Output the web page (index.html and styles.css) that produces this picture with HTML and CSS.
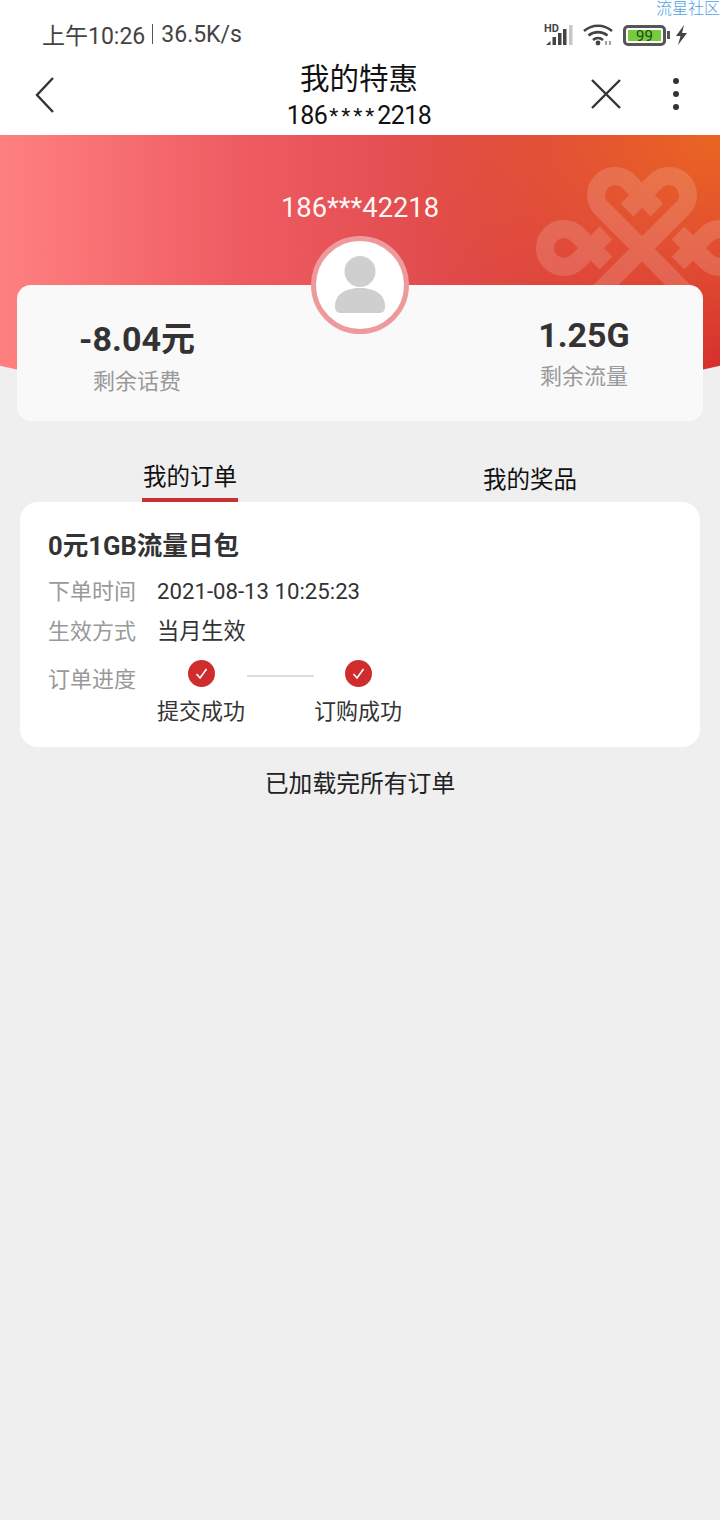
FILE: index.html
```html
<!DOCTYPE html>
<html lang="en">
<head>
    <meta charset="UTF-8">
    <meta name="viewport" content="width=device-width, initial-scale=1.0">
    <title>我的特惠</title>
    <link rel="stylesheet" href="styles.css">
</head>
<body>
    <div class="watermark">流星社区</div>

    <div class="status-bar">
        <div class="status-left">
            <span>上午10:26</span>
            <span class="status-sep"></span>
            <span>36.5K/s</span>
        </div>
        <div class="status-right">
            <svg class="icon-signal" width="30" height="26" viewBox="0 -2 30 26">
                <text x="0" y="8" class="hd-text">HD</text>
                <path d="M2 21 L6.5 17 V21 Z" fill="#444"/>
                <rect x="8.5" y="13" width="3.5" height="8" fill="#444"/>
                <rect x="14" y="9" width="3.5" height="12" fill="#444"/>
                <rect x="19" y="5" width="3.5" height="16" fill="#444"/>
                <rect x="25" y="1" width="3.5" height="20" fill="#444" opacity="0.3"/>
            </svg>
            <svg class="icon-wifi" width="30" height="22" viewBox="0 0 30 22">
                <g fill="none" stroke="#444" stroke-width="2.6">
                    <path d="M1 7 C9 0 21 0 29 7"/>
                    <path d="M5.5 11.5 C11 7 19 7 24.5 11.5"/>
                    <path d="M10 16 C13 13.5 17 13.5 20 16"/>
                </g>
                <circle cx="15" cy="19" r="2.4" fill="#444"/>
                <path d="M23 17v4M27 17v4" stroke="#666" stroke-width="1.2"/>
            </svg>
            <div class="battery">
                <div class="battery-body"><span class="battery-level">99</span></div>
                <div class="battery-tip"></div>
            </div>
            <svg class="icon-bolt" width="13" height="20" viewBox="0 0 13 20">
                <path d="M9 0 L1 11 H5.5 L3 20 L12 8 H7 Z" fill="#444"/>
            </svg>
        </div>
    </div>

    <div class="nav">
        <svg class="nav-back" width="22" height="38" viewBox="0 0 22 38">
            <path d="M19 2 L3 19 L19 36" fill="none" stroke="#333" stroke-width="2.4"/>
        </svg>
        <div class="nav-title">
            <div class="nav-name">我的特惠</div>
            <div class="nav-phone">186<span class="nav-stars">****</span>2218</div>
        </div>
        <div class="nav-actions">
            <svg class="nav-close" width="32" height="32" viewBox="0 0 32 32">
                <path d="M2 2 L30 30 M30 2 L2 30" fill="none" stroke="#333" stroke-width="2.4"/>
            </svg>
            <div class="nav-more"><i></i><i></i><i></i></div>
        </div>
    </div>

    <div class="hero">
        <div class="hero-bg">
            <svg class="hero-logo" width="240" height="180" viewBox="520 150 240 180">
                <g fill="none" stroke="#fff" stroke-width="18">
                    <path d="M690 297 L602.6 209.4 A19 19 0 1 1 629.4 182.6 L657 210"/>
                    <path d="M594 297 L681.4 209.4 A19 19 0 1 0 654.6 182.6 L627 210"/>
                    <path d="M606 233 L577.4 261.4 A19 19 0 1 1 577.4 234.6 L606 263"/>
                    <path d="M678 233 L706.6 261.4 A19 19 0 1 0 706.6 234.6 L678 263"/>
                </g>
            </svg>
        </div>
        <div class="hero-phone">186***42218</div>
        <div class="summary">
            <div class="summary-item">
                <div class="summary-value">-8.04元</div>
                <div class="summary-label">剩余话费</div>
            </div>
            <div class="summary-item summary-item-right">
                <div class="summary-value">1.25G</div>
                <div class="summary-label">剩余流量</div>
            </div>
            <div class="avatar">
                <svg width="52" height="58" viewBox="0 0 52 58">
                    <circle cx="26" cy="15.5" r="15.5" fill="#cfcfcf"/>
                    <path d="M1 50 C1 38 12 32 26 32 C40 32 51 38 51 50 C51 55 49 57 45 57 H7 C3 57 1 55 1 50 Z" fill="#cfcfcf"/>
                </svg>
            </div>
        </div>
    </div>

    <div class="tabs">
        <div class="tab tab-active">我的订单</div>
        <div class="tab tab-other">我的奖品</div>
    </div>

    <div class="order">
        <div class="order-title">0元1GB流量日包</div>
        <div class="order-row">
            <span class="order-label">下单时间</span>
            <span class="order-value order-date">2021-08-13 10:25:23</span>
        </div>
        <div class="order-row">
            <span class="order-label">生效方式</span>
            <span class="order-value">当月生效</span>
        </div>
        <div class="order-progress">
            <span class="order-label">订单进度</span>
            <div class="step">
                <svg class="step-icon" width="27" height="27" viewBox="0 0 27 27">
                    <circle cx="13.5" cy="13.5" r="13.5" fill="#cf2c2e"/>
                    <path d="M8.5 14 L12 18 L18.5 9" fill="none" stroke="#fff" stroke-width="1.6"/>
                </svg>
                <div class="step-text">提交成功</div>
            </div>
            <div class="step-line"></div>
            <div class="step">
                <svg class="step-icon" width="27" height="27" viewBox="0 0 27 27">
                    <circle cx="13.5" cy="13.5" r="13.5" fill="#cf2c2e"/>
                    <path d="M8.5 14 L12 18 L18.5 9" fill="none" stroke="#fff" stroke-width="1.6"/>
                </svg>
                <div class="step-text">订购成功</div>
            </div>
        </div>
    </div>

    <div class="end-text">已加载完所有订单</div>
</body>
</html>
```

FILE: styles.css
```css
body {
    margin: 0;
    height: 1520px;
    overflow: hidden;
    background-color: #efefef;
    font-family: Roboto, "Noto Sans CJK SC", sans-serif;
    color: #333;
    position: relative;
}

.watermark {
    position: absolute;
    top: 0;
    left: 656px;
    white-space: nowrap;
    font-size: 16px;
    line-height: 17px;
    font-weight: 300;
    color: #4c9fe2;
}

/* Status bar */
.status-bar {
    height: 64px;
    background-color: #fff;
    display: flex;
    justify-content: space-between;
    align-items: center;
    padding: 4px 32px 0 42px;
    box-sizing: border-box;
}

.status-left {
    display: flex;
    align-items: center;
    font-size: 23px;
    color: #444;
}

.status-sep {
    width: 1px;
    height: 20px;
    background-color: #555;
    margin: 0 8px 0 7px;
}

.status-right {
    display: flex;
    align-items: center;
    gap: 10px;
    margin-top: 2px;
}

.hd-text {
    font-size: 11px;
    font-weight: 700;
    fill: #444;
}

.battery {
    display: flex;
    align-items: center;
}

.battery-body {
    width: 43px;
    height: 21px;
    box-sizing: border-box;
    border: 3px solid #555;
    border-radius: 5px;
    padding: 2px;
    display: flex;
}

.battery-level {
    flex: 1;
    background-color: #76cc3c;
    font-size: 15px;
    line-height: 13px;
    text-align: center;
    color: #1d4a10;
}

.battery-tip {
    width: 3px;
    height: 8px;
    margin-left: 1px;
    background-color: #555;
}

.icon-bolt {
    margin-left: -5px;
}

.icon-signal {
    margin-right: -1px;
}

/* Nav */
.nav {
    height: 71px;
    background-color: #fff;
    display: grid;
    grid-template-columns: 1fr auto 1fr;
    align-items: center;
    padding: 0 41px 0 39px;
}

.nav-back {
    margin: -10px 0 0 -5px;
}

.nav-title {
    text-align: center;
    color: #111;
}

.nav-name {
    font-size: 29.5px;
    line-height: 36px;
    margin-top: -5px;
}

.nav-phone {
    font-size: 25px;
    line-height: 36px;
    letter-spacing: -0.6px;
    margin-top: 1px;
}

.nav-stars {
    font-size: 21px;
    letter-spacing: 3px;
    vertical-align: 1px;
    margin-left: 2px;
}

.nav-actions {
    display: flex;
    justify-content: flex-end;
    align-items: center;
    gap: 51px;
    margin-top: -12px;
}

.nav-more {
    display: flex;
    flex-direction: column;
    gap: 7px;
}

.nav-more i {
    width: 6px;
    height: 6px;
    border-radius: 50%;
    background-color: #333;
}

/* Hero */
.hero {
    position: relative;
    padding: 57px 17px 0;
}

.hero-bg {
    position: absolute;
    top: 0;
    left: 0;
    width: 720px;
    height: 270px;
    overflow: hidden;
    background:
        radial-gradient(ellipse 340px 250px at 100% 0, #ea6622, rgba(230, 90, 50, 0.7) 50%, rgba(230, 80, 60, 0)),
        linear-gradient(90deg, #ff8080 0%, #ee5c62 33%, #e04a4c 62%, #d42b2d 100%);
    clip-path: ellipse(700px 269px at 50% 0);
}

.hero-logo {
    position: absolute;
    top: 15px;
    left: 520px;
    opacity: 0.15;
}

.hero-phone {
    position: relative;
    text-align: center;
    font-size: 27.3px;
    line-height: 32px;
    color: #fff;
    opacity: 0.95;
}

.summary {
    position: relative;
    margin-top: 61px;
    height: 136px;
    background-color: #f9f9f9;
    border-radius: 14px;
    display: flex;
    justify-content: space-between;
}

.summary-item {
    width: 240px;
    text-align: center;
    padding-top: 32px;
}

.summary-item-right {
    width: 238px;
    padding-top: 28px;
}

.summary-value {
    font-size: 34px;
    line-height: 44px;
    font-weight: 700;
}

.summary-label {
    font-size: 22px;
    line-height: 32px;
    margin-top: 5px;
    color: #999;
}

.summary-item-right .summary-label {
    margin-top: 4px;
}

.avatar {
    position: absolute;
    top: -49px;
    left: 294px;
    width: 98px;
    height: 98px;
    box-sizing: border-box;
    border: 5px solid #ee9a9d;
    border-radius: 50%;
    background-color: #fff;
    display: flex;
    justify-content: center;
    align-items: center;
}

/* Tabs */
.tabs {
    display: flex;
    height: 81px;
    padding-left: 142px;
}

.tab {
    font-size: 23.5px;
    color: #111;
    text-align: center;
}

.tab-active {
    width: 96px;
    height: 81px;
    box-sizing: border-box;
    padding-top: 39px;
    line-height: 34px;
    border-bottom: 4px solid #c9302f;
}

.tab-other {
    margin-left: 245px;
    padding-top: 42px;
    line-height: 34px;
}

/* Order card */
.order {
    margin: 0 20px;
    height: 245px;
    box-sizing: border-box;
    padding: 26px 28px 0;
    background-color: #fff;
    border-radius: 18px;
}

.order-title {
    font-size: 25.6px;
    line-height: 36px;
    font-weight: 700;
}

.order-row {
    display: flex;
    height: 40px;
    align-items: center;
    font-size: 22.2px;
}

.order-title + .order-row {
    margin-top: 5px;
}

.order-label {
    width: 109px;
    flex-shrink: 0;
    font-size: 22px;
    color: #999;
}

.order-value {
    color: #333;
}

.order-date {
    margin-top: 4px;
}

.order-progress {
    display: flex;
    align-items: flex-start;
    font-size: 22px;
    margin-top: 11px;
}

.order-progress .order-label {
    padding-top: 1px;
}

.step {
    width: 88px;
    text-align: center;
}

.step-icon {
    display: block;
    margin: 0 auto;
}

.step-text {
    margin-top: 9px;
    line-height: 32px;
    color: #333;
    white-space: nowrap;
}

.step-line {
    width: 67px;
    height: 2px;
    margin: 15px 0 0 2px;
    background-color: #ddd;
}

.end-text {
    margin-top: 20px;
    text-align: center;
    font-size: 23.8px;
    line-height: 34px;
    color: #222;
}
```
